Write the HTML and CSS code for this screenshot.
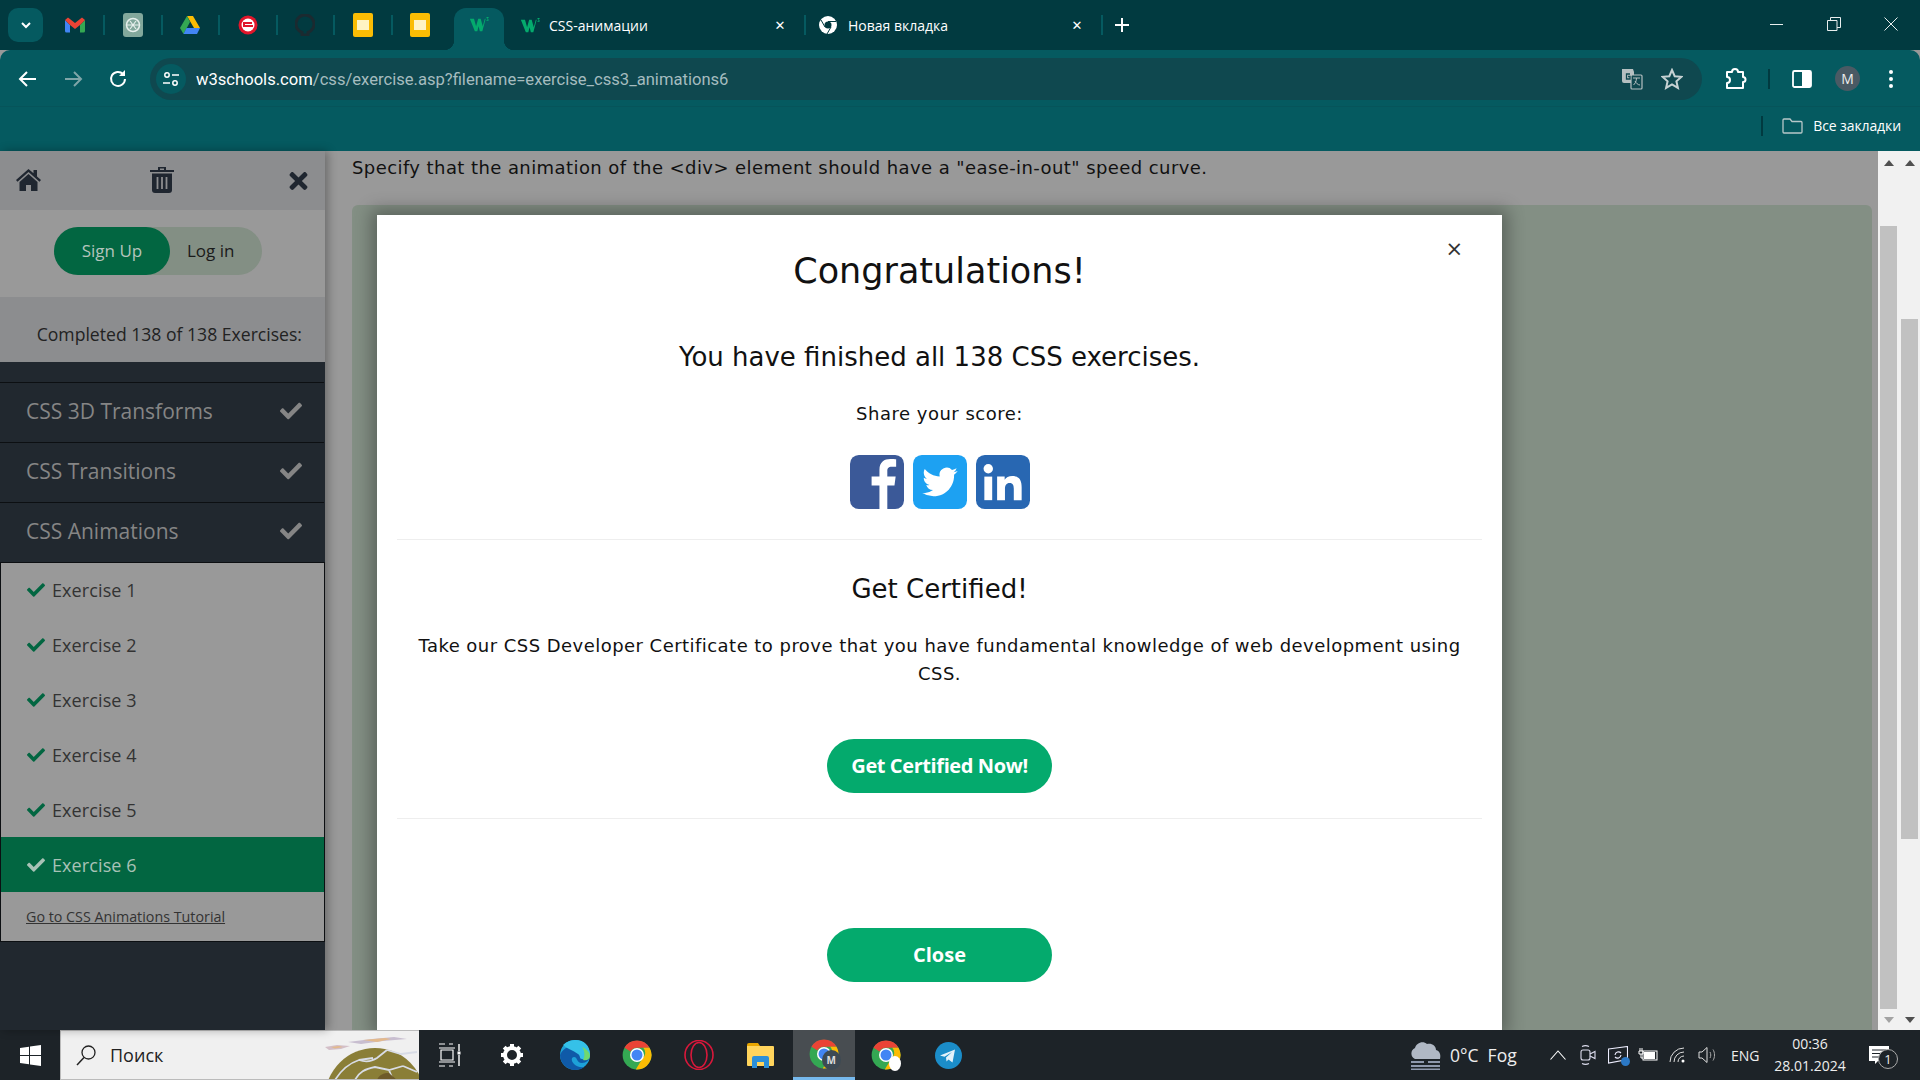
FILE: index.html
```html
<!DOCTYPE html>
<html lang="ru">
<head>
    <meta charset="UTF-8">
    <title>CSS-анимации</title>
    <link rel="stylesheet" href="styles.css">
</head>
<body>
    <svg class="defs" width="0" height="0">
        <defs>
            <symbol id="chrome" viewBox="0 0 24 24">
                <circle cx="12" cy="12" r="11.5" fill="#34a853"/>
                <path d="M2 6.2a11.5 11.5 0 0 1 20 0H12a6 6 0 0 0-5.2 3z" fill="#ea4335"/>
                <path d="M22 6.2A11.5 11.5 0 0 1 11 23.5l5.2-8.5A6 6 0 0 0 17 6.2z" fill="#fbbc04"/>
                <circle cx="12" cy="12" r="5.6" fill="#fff"/>
                <circle cx="12" cy="12" r="4.4" fill="#4285f4"/>
            </symbol>
            <symbol id="w3" viewBox="0 0 24 20">
                <path d="M1 3h5l2.500 9L11 3h3l2.500 9L19 3h1l-4 15h-3l-1.500-6-1.500 6H7z" fill="#04aa6d"/>
                <path d="M21 1h2.500v1l-1 1 1 1v1.500H21v-.8h1.500l-.8-1.200.8-1H21z" fill="#04aa6d"/>
            </symbol>
            <symbol id="slides" viewBox="0 0 20 24">
                <rect width="20" height="24" rx="2" fill="#fbbc04"/>
                <rect x="4" y="7" width="12" height="10" fill="#fff3c4"/>
            </symbol>
            <symbol id="check" viewBox="0 0 512 512">
                <path d="M173.900 439.400l-166.400-166.400c-10-10-10-26.200 0-36.200l36.200-36.200c10-10 26.200-10 36.200 0L192 312.700 432.100 72.600c10-10 26.200-10 36.200 0l36.200 36.200c10 10 10 26.200 0 36.200l-294.400 294.400c-10 10-26.200 10-36.200 0z"/>
            </symbol>
        </defs>
    </svg>

    <header class="tabstrip">
        <div class="tab-search"><svg width="14" height="14" viewBox="0 0 14 14"><path d="M3 5l4 4 4-4" fill="none" stroke="#fff" stroke-width="2"/></svg></div>
        <div class="pins">
            <div class="pin"><svg width="20" height="16" viewBox="0 0 20 16"><path d="M0 3v11a1.500 1.500 0 0 0 1.500 1.500H5V8z" fill="#4285f4"/><path d="M15 8v7.500h3.500A1.500 1.500 0 0 0 20 14V3z" fill="#34a853"/><path d="M0 3l3-2.500L10 6l7-5.500L20 3l-5 5-5 4-5-4z" fill="#ea4335"/></svg></div><i class="sep"></i>
            <div class="pin"><svg width="20" height="24" viewBox="0 0 20 24"><rect width="20" height="24" rx="3" fill="#82a89c"/><circle cx="10" cy="12" r="6.500" fill="none" stroke="#e6efec" stroke-width="1.500"/><path d="M7 8l6 8M13 8l-6 8M4 12h12" stroke="#e6efec" stroke-width="1.200"/></svg></div><i class="sep"></i>
            <div class="pin"><svg width="20" height="18" viewBox="0 0 20 18"><path d="M7 0h6l7 12h-6z" fill="#fbbc04"/><path d="M7 0l3 6-6.500 12L0 12z" fill="#34a853"/><path d="M6.500 12H20l-3 6H3.500z" fill="#4285f4"/></svg></div><i class="sep"></i>
            <div class="pin"><svg width="20" height="20" viewBox="0 0 20 20"><circle cx="10" cy="10" r="9.500" fill="#e0162b"/><circle cx="10" cy="10" r="6.500" fill="#fff"/><path d="M5 7h9v2H7v1h8v2H5z" fill="#e0162b"/></svg></div><i class="sep"></i>
            <div class="pin"><svg width="20" height="22" viewBox="0 0 20 22"><path d="M10 1a9 9 0 0 0-3 17.500V21h6v-2.500A9 9 0 0 0 10 1z" fill="none" stroke="#1b2a30" stroke-width="3"/></svg></div><i class="sep"></i>
            <div class="pin"><svg width="20" height="24"><use href="#slides"/></svg></div><i class="sep"></i>
            <div class="pin"><svg width="20" height="24"><use href="#slides"/></svg></div>
        </div>
        <div class="tab-active"><svg width="20" height="17"><use href="#w3"/></svg></div>
        <div class="tab tab-first">
            <svg width="20" height="17"><use href="#w3"/></svg>
            <span class="tab-title">CSS-анимации</span>
            <span class="tab-close">✕</span>
        </div>
        <i class="sep"></i>
        <div class="tab tab-second">
            <svg width="18" height="18" viewBox="0 0 18 18"><circle cx="9" cy="9" r="9" fill="#fff"/><circle cx="9" cy="9" r="3.500" fill="#013a40"/><path d="M9 5.500h8M6 11L2 4M12 11l-4 7" stroke="#013a40" stroke-width="1"/></svg>
            <span class="tab-title">Новая вкладка</span>
            <span class="tab-close">✕</span>
        </div>
        <i class="sep"></i>
        <div class="tab-new"><svg width="16" height="16" viewBox="0 0 16 16"><path d="M8 1v14M1 8h14" stroke="#fff" stroke-width="2"/></svg></div>
        <div class="window-btns">
            <svg width="14" height="14" viewBox="0 0 14 14"><path d="M0 7.500h13" stroke="#e8eeee"/></svg>
            <svg width="14" height="14" viewBox="0 0 14 14"><path d="M.5 3.500h9.500v10H.5zM3.500 3.500V.5h10v10H10" fill="none" stroke="#e8eeee"/></svg>
            <svg width="14" height="14" viewBox="0 0 14 14"><path d="M.5.5l13 13M13.500.5l-13 13" stroke="#e8eeee"/></svg>
        </div>
    </header>

    <div class="toolbar">
        <div class="nav-row">
            <svg class="nav-back" width="24" height="24" viewBox="0 0 24 24"><path d="M20 12H5M11 5l-7 7 7 7" fill="none" stroke="#fff" stroke-width="2"/></svg>
            <svg class="nav-item" width="24" height="24" viewBox="0 0 24 24"><path d="M4 12h15M13 5l7 7-7 7" fill="none" stroke="#7fa5a8" stroke-width="2"/></svg>
            <svg class="nav-item" width="24" height="24" viewBox="0 0 24 24"><path d="M19 12a7 7 0 1 1-2-5" fill="none" stroke="#fff" stroke-width="2"/><path d="M19 3v6h-6z" fill="#fff"/></svg>
            <div class="omnibox">
                <div class="site-info"><svg width="16" height="16" viewBox="0 0 16 16"><circle cx="4" cy="4" r="2.200" fill="none" stroke="#fff" stroke-width="1.500"/><circle cx="12" cy="12" r="2.200" fill="none" stroke="#fff" stroke-width="1.500"/><path d="M9 4h7M0 12h7" stroke="#fff" stroke-width="1.500"/></svg></div>
                <div class="url"><span class="url-host">w3schools.com</span>/css/exercise.asp?filename=exercise_css3_animations6</div>
                <svg class="omni-translate" width="22" height="22" viewBox="0 0 22 22"><path d="M1 1h11l1 3v11H3a2 2 0 0 1-2-2z" fill="#b5c0c1"/><rect x="10" y="7" width="11" height="14" rx="1" fill="#0f484f" stroke="#b5c0c1" stroke-width="1.200"/><path d="M12 10h7M15.500 10c0 4-2 6-3 7M14 13c1 2 3 4 5 4" stroke="#b5c0c1" fill="none"/><path d="M9 6H5.500v5H9V8.500H7" fill="none" stroke="#0f484f" stroke-width="1.300"/></svg>
                <svg class="omni-star" width="22" height="22" viewBox="0 0 22 22"><path d="M11 2l2.700 6.200 6.800.6-5.100 4.500 1.500 6.600L11 16.400l-5.900 3.500 1.500-6.600L1.500 8.800l6.800-.6z" fill="none" stroke="#c6d2d3" stroke-width="2"/></svg>
            </div>
            <svg class="tool-ext" width="24" height="24" viewBox="0 0 24 24"><path d="M3 5h5a3 3 0 0 1 6 0h5v5a2.500 2.500 0 0 1 0 5v6H3v-5a3 3 0 0 0 0-6z" fill="none" stroke="#fff" stroke-width="2" stroke-linejoin="round"/></svg>
            <i class="tool-sep"></i>
            <svg class="tool-panel" width="20" height="20" viewBox="0 0 20 20"><rect x="1" y="2" width="18" height="16" rx="1.500" fill="none" stroke="#fff" stroke-width="1.800"/><path d="M10 2h8a1 1 0 0 1 1 1v14a1 1 0 0 1-1 1h-8z" fill="#fff"/></svg>
            <div class="avatar">M</div>
            <svg class="tool-dots" width="24" height="24" viewBox="0 0 24 24"><circle cx="12" cy="5" r="2" fill="#fff"/><circle cx="12" cy="12" r="2" fill="#fff"/><circle cx="12" cy="19" r="2" fill="#fff"/></svg>
        </div>
        <div class="bookmarks">
            <i class="bm-sep"></i>
            <svg width="21" height="16" viewBox="0 0 21 16"><path d="M1 14V2a1 1 0 0 1 1-1h6l2 2.500h9a1 1 0 0 1 1 1V14a1 1 0 0 1-1 1H2a1 1 0 0 1-1-1z" fill="none" stroke="#b8c8c9" stroke-width="1.300"/></svg>
            <span class="bm-text">Все закладки</span>
        </div>
    </div>

    <div class="page">
        <aside class="sidebar">
            <div class="side-tools">
                <svg width="27" height="24" viewBox="0 0 27 24"><path d="M13.500 1L1 12l1.500 1.700L13.500 4l11 9.700L26 12l-4-3.500V2h-3.500v3.300z" fill="#1f2630"/><path d="M4.500 14l9-8 9 8v9h-6.500v-6h-5v6H4.500z" fill="#1f2630"/></svg>
                <svg class="tool-trash" width="24" height="27" viewBox="0 0 24 27"><path d="M0 4h8V1h8v3h8v2H0zM10 2.500V4h4V2.500z" fill="#1f2630" fill-rule="evenodd"/><path d="M2 7.500h20V24a3 3 0 0 1-3 3H5a3 3 0 0 1-3-3z" fill="#1f2630"/><path d="M7.500 11v12M12 11v12M16.500 11v12" stroke="#8c8d8f" stroke-width="1.800"/></svg>
                <svg class="tool-close" width="21" height="26" viewBox="0 0 352 512"><path d="M242.700 256l100.100-100.100c12.300-12.300 12.300-32.200 0-44.500l-22.200-22.200c-12.300-12.300-32.200-12.300-44.500 0L176 189.300 75.900 89.200c-12.300-12.300-32.200-12.300-44.500 0L9.200 111.500c-12.300 12.300-12.300 32.200 0 44.500L109.300 256 9.200 356.100c-12.300 12.300-12.300 32.200 0 44.500l22.200 22.200c12.300 12.300 32.200 12.300 44.500 0L176 322.700l100.100 100.100c12.300 12.300 32.200 12.300 44.500 0l22.200-22.200c12.300-12.300 12.300-32.200 0-44.500z" fill="#1f2630"/></svg>
            </div>
            <div class="side-auth">
                <div class="auth-toggle">
                    <a class="auth-signup">Sign Up</a>
                    <a class="auth-login">Log in</a>
                </div>
            </div>
            <div class="side-progress">Completed 138 of 138 Exercises:</div>
            <div class="side-nav">
                <div class="chapter">CSS 3D Transforms<svg width="22" height="22"><use href="#check"/></svg></div>
                <div class="chapter">CSS Transitions<svg width="22" height="22"><use href="#check"/></svg></div>
                <div class="chapter">CSS Animations<svg width="22" height="22"><use href="#check"/></svg></div>
                <div class="exercises">
                    <div class="exercise"><svg width="18" height="18"><use href="#check"/></svg>Exercise 1</div>
                    <div class="exercise"><svg width="18" height="18"><use href="#check"/></svg>Exercise 2</div>
                    <div class="exercise"><svg width="18" height="18"><use href="#check"/></svg>Exercise 3</div>
                    <div class="exercise"><svg width="18" height="18"><use href="#check"/></svg>Exercise 4</div>
                    <div class="exercise"><svg width="18" height="18"><use href="#check"/></svg>Exercise 5</div>
                    <div class="exercise exercise-current"><svg width="18" height="18"><use href="#check"/></svg>Exercise 6</div>
                    <div class="tutorial-link"><a>Go to CSS Animations Tutorial</a></div>
                </div>
            </div>
        </aside>

        <main class="main">
            <p class="task">Specify that the animation of the &lt;div&gt; element should have a "ease-in-out" speed curve.</p>
            <div class="editor"></div>

            <section class="modal">
                <span class="modal-close">×</span>
                <h1 class="modal-title">Congratulations!</h1>
                <p class="modal-lead">You have finished all 138 CSS exercises.</p>
                <p class="modal-share">Share your score:</p>
                <div class="social">
                    <svg width="54" height="54" viewBox="0 0 55 55"><rect width="55" height="55" rx="9" fill="#3b5998"/><path d="M30 55V31h-8v-9h8v-7c0-8 5-11 11-11 2.500 0 5 .2 6 .4V12h-4.500c-3.500 0-4.500 1.700-4.500 4.500V22h8.500l-1.200 9H38v24z" fill="#fff"/></svg>
                    <svg width="54" height="54" viewBox="0 0 55 55"><rect width="55" height="55" rx="9" fill="#1da1f2"/><g transform="translate(9.500 9.500) scale(1.500)"><path d="M23.950 4.570a10 10 0 0 1-2.820.78 4.960 4.960 0 0 0 2.160-2.730c-.95.560-2 .96-3.130 1.190a4.920 4.920 0 0 0-8.380 4.480C7.690 8.100 4.070 6.130 1.640 3.160a4.820 4.820 0 0 0-.67 2.480c0 1.710.87 3.210 2.190 4.090a4.900 4.900 0 0 1-2.230-.61v.06a4.920 4.920 0 0 0 3.950 4.830 5 5 0 0 1-2.210.08 4.940 4.940 0 0 0 4.600 3.420 9.870 9.870 0 0 1-6.100 2.110c-.39 0-.78-.03-1.170-.07a14 14 0 0 0 7.560 2.210c9.050 0 14-7.500 14-13.990 0-.21 0-.42-.02-.63A9.940 9.940 0 0 0 24 4.590z" fill="#fff"/></g></svg>
                    <svg width="54" height="54" viewBox="0 0 55 55"><rect width="55" height="55" rx="9" fill="#2867b2"/><circle cx="12.500" cy="14" r="4.800" fill="#fff"/><rect x="8.500" y="22" width="8" height="24" fill="#fff"/><path d="M21.500 22h7.700v3.300c1.300-2.300 4-4 7.800-4 7.500 0 9.500 4.800 9.500 11.500V46h-8V34.500c0-3.400-.8-6-4.200-6-3.500 0-4.800 2.500-4.800 6V46h-8z" fill="#fff"/></svg>
                </div>
                <hr class="modal-rule">
                <h2 class="modal-subtitle">Get Certified!</h2>
                <p class="modal-text">Take our CSS Developer Certificate to prove that you have fundamental knowledge of web development using CSS.</p>
                <a class="btn btn-cert">Get Certified Now!</a>
                <hr class="modal-rule rule-low">
                <a class="btn btn-close">Close</a>
            </section>
        </main>

        <div class="scrollbar">
            <i class="arrow-up"></i>
            <div class="thumb thumb-long"></div>
            <i class="arrow-down arrow-dim"></i>
        </div>
        <div class="scrollbar">
            <i class="arrow-up"></i>
            <div class="thumb thumb-short"></div>
            <i class="arrow-down"></i>
        </div>
    </div>

    <footer class="taskbar">
        <div class="start"><svg width="21" height="21" viewBox="0 0 21 21"><path d="M0 3l9-1.300V10H0zM10 1.500L21 0v10H10zM0 11h9v8.300L0 18zM10 11h11v10l-11-1.500z" fill="#fff"/></svg></div>
        <div class="search">
            <svg width="22" height="22" viewBox="0 0 22 22"><circle cx="13.500" cy="8.500" r="6.500" fill="none" stroke="#222" stroke-width="1.300"/><path d="M9 13.500L2 21" stroke="#222" stroke-width="1.500"/></svg>
            <span class="search-text">Поиск</span>
            <svg class="search-art" width="94" height="50" viewBox="0 0 94 50"><circle cx="50" cy="68" r="50" fill="#8a7e37"/><path d="M10 50c5-8 12-16 24-20l14-2M34 30c6 2 12 2 18-2l10-8M30 50c4-8 10-11 20-13l14 3 14-4M64 40l4 10M78 36l14 6M62 20l14 4 16-2" fill="none" stroke="#d8dce6" stroke-width="1.800"/><path d="M52 50c2-5 6-7 12-7l8 7z" fill="#6e5a2a"/><path d="M23 12l24-3 22-2 13 2-24 2-22 3z" fill="#c8bed0"/><path d="M38 10l22-2 6 1-14 3z" fill="#e3b98c"/><path d="M0 17l12-2 13 1-9 3-12 1z" fill="#d3bfc8"/><path d="M6 17l8-1 4 1-8 1.500z" fill="#e3b98c"/></svg>
        </div>
        <div class="task-apps">
            <div class="app"><svg width="22" height="24" viewBox="0 0 22 24"><path d="M0 1h6M10 1h4M0 23h6M10 23h4M2 7h12v10H2zM0 5h16M0 19h16" fill="none" stroke="#fff" stroke-width="1.200"/><path d="M20 1v7M20 12v11" stroke="#fff" stroke-width="1.400"/><rect x="18.500" y="8.500" width="3" height="3" fill="#fff"/></svg></div>
            <div class="app"><svg width="24" height="24" viewBox="0 0 24 24"><circle cx="12" cy="12" r="7" fill="none" stroke="#fff" stroke-width="4"/><path d="M12 1v4M12 19v4M1 12h4M19 12h4M4.200 4.200l2.800 2.800M17 17l2.800 2.800M4.200 19.800L7 17M17 7l2.800-2.800" stroke="#fff" stroke-width="4"/></svg></div>
            <div class="app"><svg width="30" height="30" viewBox="0 0 30 30"><circle cx="15" cy="15" r="15" fill="#1da1d8"/><path d="M30 15c0 5-4 8-8 8-6 0-4-6-8-6-3 0-3 4 0 7 2 2 6 4 10 3-2 2-5 3-9 3-8 0-15-7-15-15 2-5 7-9 13-9 8 0 17 3 17 9z" fill="#0f5aa8"/><path d="M3 5c4-4 9-5 13-5 8 0 14 6 14 14 0 3-3 6-8 5-3 0-1-3-4-5-5-4-11-5-15-9z" fill="#35c1e8"/><path d="M22 7c5 2 8 6 8 9 0 3-3 5-7 4 2-3 2-9-1-13z" fill="#6fd86f"/></svg></div>
            <div class="app"><svg width="30" height="30"><use href="#chrome"/></svg></div>
            <div class="app"><svg width="30" height="30" viewBox="0 0 30 30"><ellipse cx="15" cy="15" rx="14" ry="14.500" fill="none" stroke="#d9183b" stroke-width="1.600"/><ellipse cx="15" cy="15" rx="8" ry="12.500" fill="none" stroke="#d9183b" stroke-width="1.600"/></svg></div>
            <div class="app"><svg width="28" height="26" viewBox="0 0 28 26"><path d="M0 3a2 2 0 0 1 2-2h9l2 3H0z" fill="#e8a500"/><path d="M0 4h26a1 1 0 0 1 1 1v18a1 1 0 0 1-1 1H1a1 1 0 0 1-1-1z" fill="#ffd45c"/><path d="M5 26V16a2 2 0 0 1 2-2h13a2 2 0 0 1 2 2v10h-5v-6h-7v6z" fill="#2b8fd8"/></svg></div>
            <div class="app app-active">
                <span class="app-badged">
                    <svg width="30" height="30"><use href="#chrome"/></svg>
                    <span class="badge-m">M</span>
                </span>
            </div>
            <div class="app">
                <span class="app-badged">
                    <svg width="30" height="30"><use href="#chrome"/></svg>
                    <span class="badge-white"></span>
                </span>
            </div>
            <div class="app"><svg width="27" height="27" viewBox="0 0 27 27"><circle cx="13.500" cy="13.500" r="13.500" fill="#1b8dc9"/><path d="M5 13.500l15-6-2.500 13-4-3-2 2-.5-4 6-5.500-7.500 4.800z" fill="#e4f2fa"/></svg></div>
        </div>
        <div class="tray">
            <div class="weather">
                <svg width="31" height="30" viewBox="0 0 31 30"><path d="M5 19a6 6 0 0 1 0-11c1-5 8-8 12-4 5-1 9 2 9 6 4 1 5 5 4 9z" fill="#b0b8c4"/><path d="M1 22h13M18 22h12M1 26h29M1 29.500h29" stroke="#8e98ac" stroke-width="2"/></svg>
                <span class="weather-text">0°C&nbsp; Fog</span>
            </div>
            <div class="tray-icon"><svg width="16" height="10" viewBox="0 0 16 10"><path d="M.5 9.500L8 1l7.500 8.500" fill="none" stroke="#fff" stroke-width="1.100"/></svg></div>
            <div class="tray-icon"><svg width="16" height="20" viewBox="0 0 16 20"><rect x="1" y="5" width="9" height="10" rx="2" fill="none" stroke="#dde" stroke-width="1.100"/><path d="M10 9l5-2.500v7L10 11M2 1.500c2-1 5-1 7 0M2 18.500c2 1 5 1 7 0" fill="none" stroke="#dde" stroke-width="1.100"/></svg></div>
            <div class="tray-icon tray-screen"><svg width="20" height="18" viewBox="0 0 20 18"><path d="M.5 3L19.500.5v13L.5 17zM7 9a3.500 3.500 0 0 1 6-2M13 9a3.500 3.500 0 0 1-6 2" fill="none" stroke="#eef" stroke-width="1.100"/></svg><i class="tray-dot"></i></div>
            <div class="tray-icon"><svg width="20" height="14" viewBox="0 0 20 14"><rect x="5" y="3" width="14" height="9" fill="none" stroke="#fff"/><rect x="6" y="4" width="11" height="7" fill="#fff"/><path d="M2 0v3M4 0v3M1 3h4v3H1zM3 6v4h2" stroke="#fff" fill="none"/></svg></div>
            <div class="tray-icon"><svg width="18" height="16" viewBox="0 0 18 16"><path d="M1 15A14 14 0 0 1 15 1M5 15A10 10 0 0 1 15 5M9 15a6 6 0 0 1 6-6" fill="none" stroke="#ddd" stroke-width="1"/><circle cx="14" cy="14" r="1.500" fill="#fff"/></svg></div>
            <div class="tray-icon"><svg width="20" height="18" viewBox="0 0 20 18"><path d="M1 6h3l5-4.500v15L4 12H1z" fill="none" stroke="#ddd" stroke-width="1"/><path d="M12 6c1 2 1 4 0 6M15 3.500c2 3 2 8 0 11" fill="none" stroke="#aaa"/></svg></div>
            <span class="tray-lang">ENG</span>
            <div class="clock"><span>00:36</span><span>28.01.2024</span></div>
            <div class="notify">
                <svg width="20" height="18" viewBox="0 0 20 18"><path d="M0 0h20v15H9l-3 3v-3H0z" fill="#fff"/><path d="M3 4h14M3 7.500h14M3 11h10" stroke="#1d2328"/></svg>
                <span class="notify-badge">1</span>
            </div>
        </div>
    </footer>
</body>
</html>
```

FILE: styles.css
```css
* {
    box-sizing: border-box;
}
html, body {
    margin: 0;
    height: 100%;
    overflow: hidden;
}
body {
    display: flex;
    flex-direction: column;
    height: 1080px;
    font-family: "Open Sans", sans-serif;
    background-color: #999;
}
.defs {
    position: absolute;
}
svg {
    flex-shrink: 0;
    display: block;
}

/* tab strip */
.tabstrip {
    height: 50px;
    flex-shrink: 0;
    display: flex;
    align-items: center;
    background-color: #013a40;
    color: white;
}
.sep {
    width: 2px;
    height: 20px;
    background-color: #055a60;
    flex-shrink: 0;
}
.tab-search {
    width: 35px;
    height: 34px;
    margin-left: 8px;
    border-radius: 10px;
    background-color: #055a60;
    display: flex;
    align-items: center;
    justify-content: center;
}
.pins {
    display: flex;
    align-items: center;
    margin-left: 4.500px;
}
.pin {
    width: 55.500px;
    display: flex;
    justify-content: center;
}
.tab-active {
    position: relative;
    width: 50px;
    height: 42px;
    margin-top: 8px;
    margin-left: 5.500px;
    padding-top: 8px;
    border-radius: 12px 12px 0 0;
    background-color: #055a60;
    display: flex;
    justify-content: center;
}
.tab-active::before,
.tab-active::after {
    content: "";
    position: absolute;
    bottom: 0;
    width: 10px;
    height: 10px;
}
.tab-active::before {
    left: -10px;
    background: radial-gradient(circle at 0 0, transparent 10px, #055a60 10.500px);
}
.tab-active::after {
    right: -10px;
    background: radial-gradient(circle at 100% 0, transparent 10px, #055a60 10.500px);
}
.tab {
    display: flex;
    align-items: center;
    font-size: 14px;
}
.tab-first {
    width: 300.500px;
    padding: 0 12px 0 16.500px;
    gap: 9px;
}
.tab-second {
    width: 295px;
    padding: 0 12px 0 13px;
    gap: 11px;
}
.tab-close {
    margin-left: auto;
    width: 24px;
    text-align: center;
    font-family: "DejaVu Sans", sans-serif;
    font-size: 13px;
    font-weight: bold;
}
.tab-new {
    margin-left: 11px;
}
.window-btns {
    margin-left: auto;
    margin-right: 22px;
    display: flex;
    gap: 43px;
    padding-bottom: 2px;
}

/* toolbar */
.toolbar {
    height: 101px;
    flex-shrink: 0;
    background-color: #055a60;
    border-radius: 10px 10px 0 0;
    color: white;
}
.nav-row {
    height: 57px;
    padding-top: 8px;
    display: flex;
    align-items: flex-start;
    border-bottom: 1px solid #06545a;
}
.nav-row > svg {
    margin-top: 9px;
}
.nav-back {
    margin-left: 16px;
}
.nav-item {
    margin-left: 21px;
}
.omnibox {
    width: 1552px;
    height: 42px;
    margin-left: 20px;
    border-radius: 21px;
    background-color: #0f484f;
    display: flex;
    align-items: center;
    padding-left: 6px;
}
.site-info {
    width: 30px;
    height: 30px;
    border-radius: 50%;
    background-color: #055a60;
    display: flex;
    align-items: center;
    justify-content: center;
}
.url {
    margin-left: 10px;
    font-family: "Roboto", sans-serif;
    font-size: 16.600px;
    color: #a5bcbf;
}
.url-host {
    color: white;
}
.omni-translate {
    margin-left: auto;
}
.omni-star {
    margin-left: 18px;
    margin-right: 19px;
}
.tool-ext {
    margin-left: 22px;
}
.tool-sep {
    width: 2px;
    height: 20px;
    margin-left: 20px;
    margin-top: 11px;
    background-color: #013a40;
}
.tool-panel {
    margin-left: 22px;
    margin-top: 11px !important;
}
.avatar {
    width: 25px;
    height: 25px;
    margin-left: 23px;
    margin-top: 8px;
    border-radius: 50%;
    background-color: #4a5a64;
    color: #eee;
    font-size: 14px;
    line-height: 25px;
    text-align: center;
}
.tool-dots {
    margin-left: 19px;
}
.bookmarks {
    height: 44px;
    display: flex;
    align-items: center;
    justify-content: flex-end;
    padding: 0 19px 7px 0;
}
.bm-sep {
    width: 2px;
    height: 20px;
    background-color: #013a40;
}
.bookmarks svg {
    margin-left: 19px;
}
.bm-text {
    margin-left: 10px;
    font-size: 14px;
    letter-spacing: -0.100px;
}

/* page under the dialog */
.page {
    flex: 1;
    display: flex;
    min-height: 0;
    background-color: #999;
}
.sidebar {
    width: 325px;
    flex-shrink: 0;
    display: flex;
    flex-direction: column;
    position: relative;
    z-index: 1;
    box-shadow: 3px 0 9px rgba(0, 0, 0, 0.3);
}
.side-tools {
    height: 59px;
    display: flex;
    align-items: center;
    padding: 0 0 2px 15px;
    background-color: #8c8d8f;
}
.tool-trash {
    margin-left: 108px;
}
.tool-close {
    margin-left: 114px;
    margin-top: 2px;
}
.side-auth {
    height: 87px;
    width: 324px;
    display: flex;
    align-items: center;
    padding: 0 0 5px 54px;
    background-color: #999;
}
.auth-toggle {
    width: 208px;
    height: 48px;
    display: flex;
    border-radius: 24px;
    background-color: #838f84;
    font-size: 17px;
    line-height: 47px;
}
.auth-signup {
    width: 116px;
    border-radius: 24px;
    background-color: #026641;
    color: #b4c4bc;
    text-align: center;
}
.auth-login {
    padding-left: 17px;
    color: #1a1a1a;
}
.side-progress {
    height: 65px;
    padding-right: 23px;
    text-align: right;
    line-height: 74px;
    font-size: 17.600px;
    color: #222;
    background-color: #8c8d8f;
}
.side-nav {
    flex: 1;
    padding-top: 20px;
    background-color: #21282f;
}
.chapter {
    height: 60px;
    display: flex;
    align-items: center;
    justify-content: space-between;
    padding: 0 22px 3px 26px;
    width: 324px;
    border-top: 1px solid #0c0f12;
    font-size: 21px;
    color: #858585;
    fill: #858585;
}
.exercises {
    width: 325px;
    border: 1px solid #0c0f12;
    border-left-width: 1px;
    background-color: #999;
}
.exercise {
    height: 55px;
    display: flex;
    align-items: center;
    gap: 7px;
    padding-left: 26px;
    font-size: 18px;
    letter-spacing: 0.100px;
    color: #333;
    fill: #026641;
}
.exercise:first-child {
    height: 54px;
}
.exercise-current {
    background-color: #026641;
    color: #a8c2b6;
    fill: #a8c2b6;
}
.tutorial-link {
    height: 49px;
    padding-left: 25px;
    line-height: 49px;
    font-size: 14.300px;
    color: #333;
    text-decoration: underline;
}

/* exercise area */
.main {
    flex: 1;
    position: relative;
    overflow: hidden;
    padding-left: 27px;
    padding-right: 6px;
}
.task {
    margin: 0;
    height: 54px;
    line-height: 33px;
    font-family: "DejaVu Sans", sans-serif;
    font-size: 18px;
    letter-spacing: 0.420px;
    color: #111;
    white-space: nowrap;
}
.editor {
    height: 825px;
    border-radius: 6px 6px 0 0;
    background-color: #838f84;
}

/* dialog */
.modal {
    position: absolute;
    left: 52px;
    top: 64px;
    bottom: 0;
    width: 1125px;
    padding: 0 20px;
    text-align: center;
    background-color: white;
    color: #111;
    font-family: "DejaVu Sans", sans-serif;
    box-shadow: 0 0 16px 6px rgba(0, 0, 0, 0.3);
}
.modal-close {
    position: absolute;
    right: 39px;
    top: 17px;
    font-size: 21px;
    line-height: 34px;
    color: #333;
}
.modal-title {
    margin: 34px 0 0;
    font-size: 35px;
    line-height: 44px;
    font-weight: normal;
}
.modal-lead {
    margin: 44px 0 0;
    font-size: 26px;
    line-height: 40px;
}
.modal-share {
    margin: 25px 0 0;
    font-size: 18px;
    line-height: 24px;
    letter-spacing: 0.500px;
}
.social {
    margin-top: 29px;
    display: flex;
    justify-content: center;
    gap: 9px;
}
.modal-rule {
    margin: 30px 0 0;
    height: 1px;
    border: 0;
    background-color: #eee;
}
.modal-subtitle {
    margin: 31px 0 0;
    font-size: 26px;
    line-height: 36px;
    font-weight: normal;
}
.modal-text {
    margin: 25px 0 0;
    padding: 0 20px;
    font-size: 18px;
    line-height: 28px;
    letter-spacing: 0.460px;
}
.btn {
    display: block;
    width: 225px;
    height: 54px;
    margin: 51px auto 0;
    border-radius: 27px;
    background-color: #04aa6d;
    color: white;
    font-family: "Open Sans", sans-serif;
    font-size: 20px;
    font-weight: bold;
    line-height: 53px;
}
.btn-cert {
    letter-spacing: -0.400px;
}
.rule-low {
    margin-top: 25px;
}
.btn-close {
    margin-top: 109px;
}

/* page scrollbars */
.scrollbar {
    width: 21px;
    flex-shrink: 0;
    display: flex;
    flex-direction: column;
    align-items: center;
    padding: 9px 0 7px;
    background-color: #f1f1f1;
}
.arrow-up,
.arrow-down {
    width: 0;
    height: 0;
    border-left: 5px solid transparent;
    border-right: 5px solid transparent;
}
.arrow-up {
    border-bottom: 6px solid #505050;
}
.arrow-down {
    margin-top: auto;
    border-top: 6px solid #505050;
}
.arrow-dim {
    border-top-color: #a3a3a3;
}
.thumb {
    width: 17px;
    margin-top: 60px;
    background-color: #c1c1c1;
}
.thumb-long {
    height: 783px;
}
.thumb-short {
    height: 520px;
    margin-top: 153px;
}

/* windows taskbar */
.taskbar {
    height: 50px;
    flex-shrink: 0;
    display: flex;
    align-items: center;
    background-color: #1d2328;
    color: white;
}
.start {
    width: 60px;
    display: flex;
    justify-content: center;
}
.search {
    width: 359px;
    height: 50px;
    display: flex;
    align-items: center;
    padding-left: 14px;
    overflow: hidden;
    background-color: #f0f0f0;
    border: 1px solid #bbb;
    border-right: 0;
    color: #222;
}
.search-text {
    margin-left: 13px;
    font-size: 18px;
}
.search-art {
    margin-left: auto;
}
.task-apps {
    display: flex;
}
.app {
    width: 62.250px;
    height: 50px;
    display: flex;
    align-items: center;
    justify-content: center;
}
.app-active {
    background-color: #484d51;
    border-bottom: 3px solid #76b9ed;
}
.app-badged {
    position: relative;
}
.badge-m {
    position: absolute;
    right: -2px;
    bottom: -1px;
    width: 19px;
    height: 20px;
    border-radius: 50%;
    background-color: #3d4a54;
    color: #ddd;
    font-size: 10px;
    font-weight: bold;
    line-height: 20px;
    text-align: center;
}
.badge-white {
    position: absolute;
    right: 0;
    bottom: -1px;
    width: 12px;
    height: 15px;
    border-radius: 50%;
    background-color: white;
}
.tray {
    margin-left: auto;
    display: flex;
    align-items: center;
    color: #eee;
}
.weather {
    width: 133px;
    display: flex;
    align-items: center;
    gap: 9px;
}
.weather-text {
    font-size: 17.500px;
    white-space: nowrap;
}
.tray-icon {
    position: relative;
    width: 30px;
    display: flex;
    justify-content: center;
}
.tray-dot {
    position: absolute;
    right: 3px;
    bottom: -2px;
    width: 9px;
    height: 9px;
    border-radius: 50%;
    background-color: #2b78c5;
}
.tray-lang {
    width: 30px;
    margin-left: 8px;
    font-size: 14px;
}
.clock {
    width: 98px;
    display: flex;
    flex-direction: column;
    align-items: center;
    gap: 4px;
    font-size: 14px;
    line-height: 18px;
}
.notify {
    position: relative;
    width: 61px;
    padding-left: 10px;
}
.notify-badge {
    position: absolute;
    left: 19px;
    top: 3px;
    width: 20px;
    height: 20px;
    border: 1px solid #aaa;
    border-radius: 50%;
    background-color: #1d2328;
    font-size: 13px;
    line-height: 18px;
    text-align: center;
}
```
